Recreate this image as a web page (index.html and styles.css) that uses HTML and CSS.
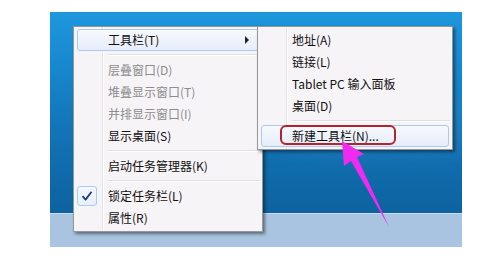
FILE: index.html
```html
<!DOCTYPE html>
<html>
<head>
<meta charset="utf-8">
<link rel="stylesheet" href="styles.css">
</head>
<body>
<div class="screen">
  <div class="desktop">
    <div class="wall"></div>
    <div class="taskbar"></div>
  </div>

  <div class="menu main">
    <div class="item hot"><span class="ico"></span><span class="label">工具栏(T)</span><span class="sub-arrow"></span></div>
    <div class="sep"></div>
    <div class="item off"><span class="ico"></span><span class="label">层叠窗口(D)</span></div>
    <div class="item off"><span class="ico"></span><span class="label">堆叠显示窗口(T)</span></div>
    <div class="item off"><span class="ico"></span><span class="label">并排显示窗口(I)</span></div>
    <div class="item"><span class="ico"></span><span class="label">显示桌面(S)</span></div>
    <div class="sep"></div>
    <div class="item"><span class="ico"></span><span class="label">启动任务管理器(K)</span></div>
    <div class="sep"></div>
    <div class="item"><span class="ico"><span class="check"><svg width="12" height="12" viewBox="0 0 12 12"><path d="M1.5 6.2 L4.6 9.6 L10.5 1.8" fill="none" stroke="#1b3f7c" stroke-width="1.8" stroke-linejoin="round"/></svg></span></span><span class="label">锁定任务栏(L)</span></div>
    <div class="item"><span class="ico"></span><span class="label">属性(R)</span></div>
  </div>

  <div class="menu sub">
    <div class="item"><span class="ico"></span><span class="label">地址(A)</span></div>
    <div class="item"><span class="ico"></span><span class="label">链接(L)</span></div>
    <div class="item"><span class="ico"></span><span class="label">Tablet PC 输入面板</span></div>
    <div class="item"><span class="ico"></span><span class="label">桌面(D)</span></div>
    <div class="sep"></div>
    <div class="item hot"><span class="ico"></span><span class="label">新建工具栏(N)...</span><span class="mark"></span></div>
  </div>

  <svg class="pointer" width="503" height="261" viewBox="0 0 503 261">
    <polygon points="342,141 364,154 357,157 389,227 351,161 344,166" fill="#f02af0"/>
  </svg>
</div>
</body>
</html>
```

FILE: styles.css
```css
html, body {
  margin: 0;
  padding: 0;
  background: #ffffff;
}

.screen {
  position: relative;
  width: 503px;
  height: 261px;
  overflow: hidden;
  font-family: "Noto Sans CJK SC", "Noto Sans", sans-serif;
  font-size: 12px;
  color: #111;
}

.desktop {
  margin: 12px 0 0 50px;
  width: 412px;
  height: 235px;
  display: flex;
  flex-direction: column;
}

.wall {
  flex: 1;
  background:
    radial-gradient(ellipse 260px 70px at 330px 110px, rgba(60,150,215,0.35), rgba(60,150,215,0) 70%),
    linear-gradient(180deg, #1e97dd 0%, #1889d0 25%, #1273b6 60%, #0d639f 100%);
}

.taskbar {
  height: 34px;
  background: #a8c4e0;
  border-top: 1px solid #c8dbee;
  box-sizing: border-box;
}

.menu {
  position: absolute;
  box-sizing: border-box;
  background-color: #f6f4f7;
  border: 1px solid #979797;
  box-shadow: 2px 2px 3px rgba(0, 0, 0, 0.45);
  padding: 2px;
  background-image: linear-gradient(to right, transparent 28px, #e2e3e3 28px, #e2e3e3 29px, #ffffff 29px, #ffffff 30px, transparent 30px);
}

.main {
  left: 73px;
  top: 26px;
  width: 190px;
}

.sub {
  left: 257px;
  top: 26px;
  width: 196px;
}

.item {
  position: relative;
  height: 22px;
  display: flex;
  align-items: center;
  box-sizing: border-box;
  border: 1px solid transparent;
  border-radius: 3px;
  margin: 0 1px;
  white-space: nowrap;
}

.item.hot {
  border-color: #a9cbee;
  background: linear-gradient(180deg, #f7f9fd 0%, #eef3fb 50%, #e4edf9 100%);
}

.item.off {
  color: #8c8c8c;
}

.ico {
  width: 30px;
  flex: none;
  display: flex;
  align-items: center;
}

.label {
  line-height: 16px;
}

.sub-arrow {
  margin-left: auto;
  margin-right: 9px;
  width: 0;
  height: 0;
  border-left: 4px solid #222;
  border-top: 4px solid transparent;
  border-bottom: 4px solid transparent;
}

.check {
  width: 20px;
  height: 20px;
  box-sizing: border-box;
  border: 1px solid #a9cbee;
  border-radius: 3px;
  background: linear-gradient(180deg, #f4f8fd, #e7eff9);
  display: flex;
  align-items: center;
  justify-content: center;
  margin-left: -1px;
}

.sep {
  height: 8px;
  margin-left: 32px;
  background: linear-gradient(to bottom, transparent 3px, #e0e0e0 3px, #e0e0e0 4px, #ffffff 4px, #ffffff 5px, transparent 5px);
}

.mark {
  position: absolute;
  left: 18px;
  top: -1px;
  width: 116px;
  height: 20px;
  box-sizing: border-box;
  border: 2px solid #b2232c;
  border-radius: 6px;
}

.pointer {
  position: absolute;
  left: 0;
  top: 0;
  pointer-events: none;
}
```
